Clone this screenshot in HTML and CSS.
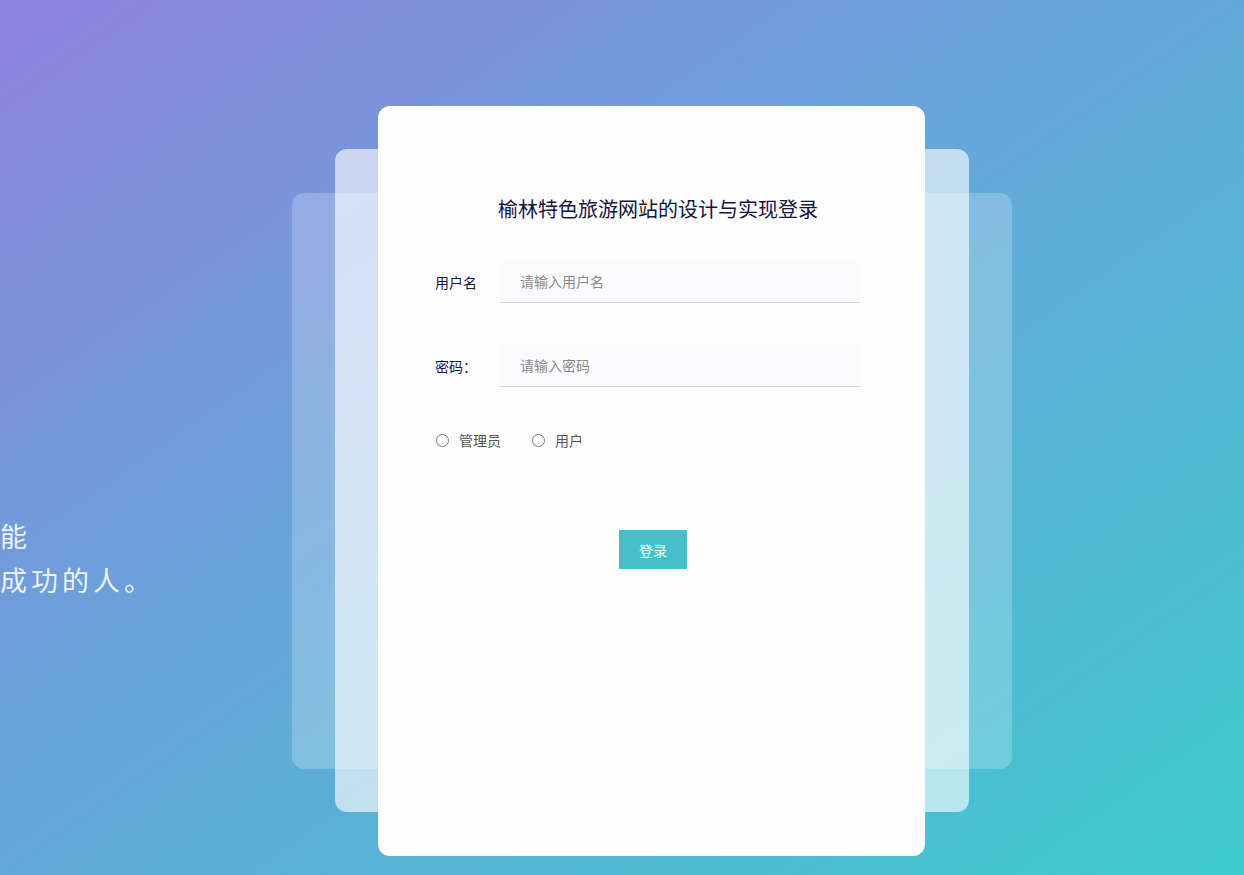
FILE: index.html
```html
<!DOCTYPE html>
<html>
	<head>
		<meta charset="UTF-8">
		<title>榆林特色旅游网站的设计与实现登录</title>
		<link rel="stylesheet" href="styles.css">
	</head>
	<body>
		<div class="slogan">
			<p>坚持的人才能</p>
			<p>终将成为最成功的人。</p>
		</div>
		<div class="stage">
			<div class="stack">
				<form id="login" class="card" action="" method="post">
					<h2 class="title">榆林特色旅游网站的设计与实现登录</h2>
					<div class="formitem">
						<label for="username">用户名</label>
						<input type="text" id="username" name="username" placeholder="请输入用户名">
					</div>
					<div class="formitem">
						<label for="password">密码：</label>
						<input type="password" id="password" name="password" placeholder="请输入密码">
					</div>
					<div class="roles">
						<label class="role"><input type="radio" name="role" value="admin"><span>管理员</span></label>
						<label class="role"><input type="radio" name="role" value="user"><span>用户</span></label>
					</div>
					<div class="actions">
						<button type="submit" class="btn">登录</button>
					</div>
				</form>
			</div>
		</div>
	</body>
</html>
```

FILE: styles.css
```css
* {
	margin: 0;
	padding: 0;
	box-sizing: border-box;
}
html, body {
	height: 100%;
}
body {
	font-family: "Noto Sans CJK SC", "Noto Sans", sans-serif;
	font-size: 14px;
	background: linear-gradient(to bottom right, #8e82dd, #62a9d9 50%, #3ecbcd);
	overflow: hidden;
	position: relative;
}
.slogan {
	position: absolute;
	left: -155px;
	top: 514px;
	color: rgba(255, 255, 255, 0.88);
	font-size: 27px;
	letter-spacing: 4px;
	line-height: 44px;
	white-space: nowrap;
}
.stage {
	padding: 106px 0 0 378px;
}
.stack {
	position: relative;
	width: 547px;
}
.stack::before,
.stack::after {
	content: "";
	position: absolute;
	border-radius: 12px;
}
.stack::before {
	inset: 87px -87px 87px -86px;
	background: rgba(255, 255, 255, 0.22);
}
.stack::after {
	inset: 43px -44px 44px -43px;
	background: rgba(255, 255, 255, 0.62);
}
.card {
	position: relative;
	z-index: 1;
	height: 750px;
	background: #fdfdfe;
	border-radius: 12px;
	padding: 89px 65px 0 57px;
}
.title {
	font-size: 20px;
	font-weight: normal;
	line-height: 28px;
	color: #14143c;
	text-align: center;
	padding-left: 21px;
	margin-bottom: 37px;
}
.formitem {
	display: flex;
	align-items: center;
	margin-bottom: 41px;
}
.formitem label {
	width: 65px;
	color: #14144a;
	font-size: 14px;
}
.formitem input {
	width: 360px;
	height: 43px;
	border: none;
	border-bottom: 1px solid #d2d2d8;
	background: #fbfbfd;
	padding: 0 20px;
	font-family: inherit;
	font-size: 14px;
	color: #333;
	outline: none;
}
.formitem input::placeholder {
	color: #8a8a8a;
}
.roles {
	display: flex;
	align-items: center;
	margin-top: -2px;
	height: 28px;
}
.role {
	display: flex;
	align-items: center;
	color: #555;
	margin-right: 30px;
	cursor: pointer;
}
.role input {
	width: 13px;
	height: 13px;
	margin: 0 10px 0 1px;
}
.actions {
	display: flex;
	justify-content: center;
	padding-left: 11px;
	margin-top: 76px;
}
.btn {
	width: 68px;
	height: 39px;
	border: none;
	background: #45c0cb;
	color: #fff;
	font-family: inherit;
	font-size: 14px;
	cursor: pointer;
}
```
